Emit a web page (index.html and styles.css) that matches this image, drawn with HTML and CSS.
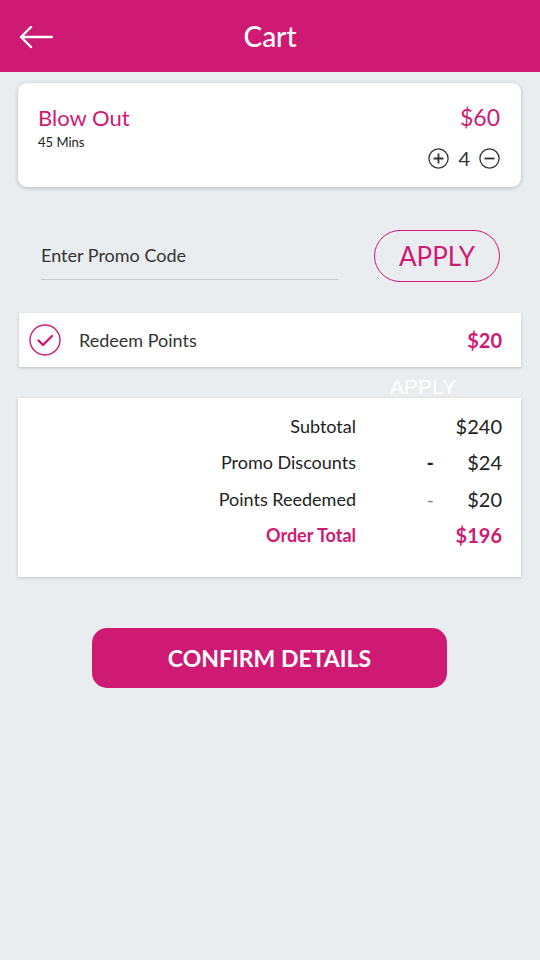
FILE: index.html
```html
<!DOCTYPE html>
<html lang="en">
<head>
  <meta charset="UTF-8">
  <meta name="viewport" content="width=device-width, initial-scale=1.0">
  <title>Cart</title>
  <link rel="stylesheet" href="styles.css">
</head>
<body>
  <!-- Header -->
  <div class="header">
    <a href="#" class="back">
      <svg width="34" height="24" viewBox="0 0 34 24">
        <path d="M33 12H2M12 2L2 12l10 10" fill="none" stroke="#fff" stroke-width="2.4" stroke-linecap="round" stroke-linejoin="round"/>
      </svg>
    </a>
    <h1>Cart</h1>
  </div>

  <!-- Item -->
  <div class="item-card">
    <div class="item-info">
      <h2>Blow Out</h2>
      <p>45 Mins</p>
    </div>
    <div class="item-side">
      <span class="item-price">$60</span>
      <div class="stepper">
        <svg width="21" height="21" viewBox="0 0 21 21">
          <circle cx="10.5" cy="10.5" r="9.6" fill="none" stroke="#333" stroke-width="1.3"/>
          <path d="M10.5 5.5v10M5.5 10.5h10" stroke="#333" stroke-width="1.8"/>
        </svg>
        <span class="qty">4</span>
        <svg width="21" height="21" viewBox="0 0 21 21">
          <circle cx="10.5" cy="10.5" r="9.6" fill="none" stroke="#333" stroke-width="1.3"/>
          <path d="M5.5 10.5h10" stroke="#333" stroke-width="1.8"/>
        </svg>
      </div>
    </div>
  </div>

  <!-- Promo -->
  <div class="promo">
    <div class="promo-input">Enter Promo Code</div>
    <button class="apply-btn">APPLY</button>
  </div>

  <!-- Redeem -->
  <div class="redeem">
    <svg width="32" height="32" viewBox="0 0 32 32">
      <circle cx="16" cy="16" r="15" fill="none" stroke="#cf1a74" stroke-width="1.4"/>
      <path d="M9.5 16.5l4.5 4.5 9-9" fill="none" stroke="#cf1a74" stroke-width="2.4" stroke-linecap="round" stroke-linejoin="round"/>
    </svg>
    <span class="redeem-label">Redeem Points</span>
    <span class="redeem-value">$20</span>
    <span class="ghost-apply">APPLY</span>
  </div>

  <!-- Totals -->
  <div class="totals">
    <div class="row">
      <span class="label">Subtotal</span>
      <span class="sign"></span>
      <span class="value">$240</span>
    </div>
    <div class="row">
      <span class="label">Promo Discounts</span>
      <span class="sign">-</span>
      <span class="value">$24</span>
    </div>
    <div class="row">
      <span class="label">Points Reedemed</span>
      <span class="sign light">-</span>
      <span class="value">$20</span>
    </div>
    <div class="row total">
      <span class="label">Order Total</span>
      <span class="sign"></span>
      <span class="value">$196</span>
    </div>
  </div>

  <div class="confirm-wrap">
    <a href="#" class="confirm-btn">CONFIRM DETAILS</a>
  </div>
</body>
</html>
```

FILE: styles.css
```css
body {
  font-family: Lato, "Open Sans", sans-serif;
  margin: 0;
  padding: 0;
  background: #eaedf0;
  color: #222;
  width: 540px;
  height: 960px;
}
.header {
  background: #cf1a74;
  height: 72px;
  display: flex;
  align-items: center;
  justify-content: center;
  position: relative;
}
.header .back {
  position: absolute;
  left: 19px;
  top: 25px;
  display: flex;
}
.header h1 {
  margin: 0;
  color: white;
  font-size: 28px;
  font-weight: 500;
}
.item-card {
  margin: 11px 19px 0 18px;
  height: 104px;
  background: white;
  border-radius: 9px;
  box-shadow: 0 1px 4px rgba(0, 0, 0, 0.22);
  display: flex;
  justify-content: space-between;
  padding: 0 21px 0 20px;
  box-sizing: border-box;
}
.item-info h2 {
  margin: 21px 0 0;
  font-size: 22px;
  font-weight: 400;
  color: #cf1a74;
}
.item-info p {
  margin: 3px 0 0;
  font-size: 13px;
  color: #222;
}
.item-side {
  display: flex;
  flex-direction: column;
  align-items: flex-end;
}
.item-price {
  margin-top: 20px;
  font-size: 23px;
  color: #cf1a74;
}
.stepper {
  display: flex;
  align-items: center;
  gap: 9px;
  margin-top: 15px;
}
.qty {
  font-size: 20px;
  color: #333;
}
.promo {
  display: flex;
  align-items: flex-start;
  justify-content: space-between;
  padding: 0 41px 0 41px;
  margin-top: 43px;
  height: 51px;
}
.promo-input {
  width: 297px;
  font-size: 18px;
  color: #333;
  border-bottom: 1px solid #c8c8cc;
  padding: 0 0 13px;
  margin-top: 14px;
}
.apply-btn {
  width: 126px;
  height: 52px;
  border: 1px solid #cf1a74;
  border-radius: 26px;
  background: transparent;
  color: #cf1a74;
  font-family: inherit;
  font-size: 26px;
  margin-right: -1px;
  padding: 0;
}
.redeem {
  position: relative;
  margin: 32px 19px 0 19px;
  height: 54px;
  background: white;
  box-shadow: 0 1px 3px rgba(0, 0, 0, 0.18);
  display: flex;
  align-items: center;
  padding: 0 19px 0 10px;
}
.redeem-label {
  font-size: 18px;
  color: #333;
  margin-left: 18px;
  flex: 1;
}
.redeem-value {
  font-size: 20px;
  font-weight: 700;
  color: #cf1a74;
}
.ghost-apply {
  position: absolute;
  left: 371px;
  top: 62px;
  font-family: "Liberation Sans", Arial, sans-serif;
  font-size: 21px;
  color: white;
}
.totals {
  margin: 31px 19px 0 18px;
  height: 179px;
  background: white;
  box-shadow: 0 1px 3px rgba(0, 0, 0, 0.18);
  padding-top: 10px;
  box-sizing: border-box;
}
.row {
  display: flex;
  align-items: center;
  height: 36.3px;
  font-size: 18px;
  color: #222;
}
.row .label {
  width: 338px;
  text-align: right;
}
.row .sign {
  width: 78px;
  text-align: right;
  font-weight: 700;
  font-size: 20px;
}
.row .sign.light {
  color: #888;
  font-weight: 400;
}
.row .value {
  flex: 1;
  text-align: right;
  padding-right: 19px;
  font-size: 20px;
}
.row.total {
  color: #cf1a74;
  font-weight: 700;
}
.confirm-wrap {
  display: flex;
  justify-content: center;
  margin-top: 51px;
}
.confirm-btn {
  display: flex;
  align-items: center;
  justify-content: center;
  width: 355px;
  height: 60px;
  margin-left: -1px;
  background: #cf1a74;
  border-radius: 15px;
  color: white;
  text-decoration: none;
  font-size: 23px;
  font-weight: 700;
}
```
